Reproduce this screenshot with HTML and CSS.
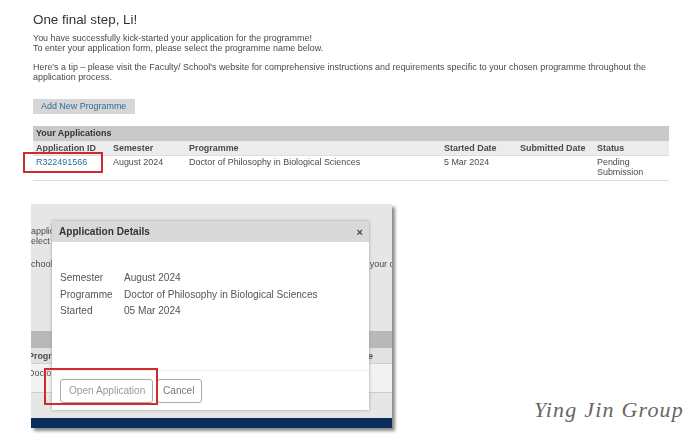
FILE: index.html
```html
<!DOCTYPE html>
<html>
  <head>
    <title>Your Applications</title>
    <meta charset='utf-8'>
    <link rel="stylesheet" href="styles.css">
  </head>

  <body>
    <div class="top">
      <h1 class="title">One final step, Li!</h1>
      <p class="intro">You have successfully kick-started your application for the programme!<br>To enter your application form, please select the programme name below.</p>
      <p class="tip">Here's a tip – please visit the Faculty/ School's website for comprehensive instructions and requirements specific to your chosen programme throughout the application process.</p>
      <a class="add-btn">Add New Programme</a>

      <div class="apps">
        <div class="apps-title">Your Applications</div>
        <div class="apps-row apps-head">
          <span class="c-id">Application ID</span>
          <span class="c-sem">Semester</span>
          <span class="c-prog">Programme</span>
          <span class="c-start">Started Date</span>
          <span class="c-sub">Submitted Date</span>
          <span class="c-status">Status</span>
        </div>
        <div class="apps-row apps-body">
          <a class="c-id link">R322491566</a>
          <span class="c-sem">August 2024</span>
          <span class="c-prog">Doctor of Philosophy in Biological Sciences</span>
          <span class="c-start">5 Mar 2024</span>
          <span class="c-sub"></span>
          <span class="c-status">Pending Submission</span>
        </div>
        <div class="red-box id-mark"></div>
      </div>
    </div>

    <div class="shot">
      <div class="behind">
        <div class="behind-text">
          <div>applic</div>
          <div>elect t</div>
          <div class="behind-gap"><span>chool'</span><span>your c</span></div>
        </div>
        <div class="behind-band"></div>
        <div class="behind-head"><b class="cut">Progr</b><b>e</b></div>
        <div class="behind-row"><span class="cut">Docto</span></div>
        <div class="behind-rest"></div>
        <div class="behind-navy"></div>
      </div>

      <div class="modal">
        <div class="modal-head">
          <b>Application Details</b>
          <span class="modal-x">×</span>
        </div>
        <div class="modal-body">
          <div class="detail"><span>Semester</span><span>August 2024</span></div>
          <div class="detail"><span>Programme</span><span>Doctor of Philosophy in Biological Sciences</span></div>
          <div class="detail"><span>Started</span><span>05 Mar 2024</span></div>
        </div>
        <div class="modal-foot">
          <a class="btn btn-open">Open Application</a>
          <a class="btn btn-cancel">Cancel</a>
        </div>
      </div>
      <div class="red-box open-mark"></div>
    </div>

    <div class="sign">Ying Jin Group</div>
  </body>
</html>
```

FILE: styles.css
```css
html, body {
  margin: 0;
  padding: 0;
}
body {
  position: relative;
  width: 693px;
  height: 441px;
  overflow: hidden;
  background: #fff;
  font-family: "Liberation Sans", Arial, sans-serif;
  font-size: 8.94px;
  line-height: 10px;
  color: #4a4a4a;
}

.top {
  padding: 12px 24px 0 33px;
  filter: blur(0.4px);
}
.title {
  margin: 0 0 5px 0;
  font-size: 13.4px;
  line-height: 16px;
  font-weight: normal;
  color: #333;
}
.intro {
  margin: 0 0 9px 0;
}
.tip {
  margin: 0 0 17px 0;
}
.add-btn {
  display: inline-block;
  padding: 0 9px 0 8px;
  height: 15px;
  line-height: 15px;
  background: #d6d6d6;
  color: #2a6f9e;
}

.apps {
  position: relative;
  width: 636px;
  margin-top: 12px;
}
.apps-title {
  height: 15px;
  line-height: 15px;
  padding-left: 3px;
  background: #c9c9c9;
  font-weight: bold;
  color: #333;
}
.apps-row {
  display: flex;
  padding-left: 3px;
}
.apps-head {
  height: 14px;
  line-height: 14px;
  background: #ececec;
  border-bottom: 1px solid #ddd;
  font-weight: bold;
}
.apps-body {
  height: 23px;
  padding-top: 1px;
  border-bottom: 1px solid #ddd;
}
.c-id { width: 77px; }
.c-sem { width: 76px; }
.c-prog { width: 255px; }
.c-start { width: 76px; }
.c-sub { width: 77px; }
.c-status { width: 68px; }
.link {
  color: #2a6f9e;
}

.red-box {
  position: absolute;
  border: 2px solid #cf2a30;
  box-sizing: border-box;
}
.id-mark {
  left: -10px;
  top: 26px;
  width: 80px;
  height: 21px;
}

.shot {
  position: absolute;
  left: 31px;
  top: 204px;
  width: 361px;
  height: 224px;
  box-shadow: 3px 3px 3px #8a8a8a;
  filter: blur(0.35px);
}
.behind {
  display: flex;
  flex-direction: column;
  height: 224px;
  background: #e6e6e6;
  overflow: hidden;
  white-space: nowrap;
}
.behind-text {
  flex: 1;
  padding-top: 22px;
}
.behind-gap {
  display: flex;
  justify-content: space-between;
  margin-top: 13px;
  margin-right: -2px;
}
.behind-band {
  height: 17px;
  background: #b9b9b9;
}
.behind-head {
  display: flex;
  justify-content: space-between;
  height: 16px;
  line-height: 16px;
  padding-right: 19px;
  background: #e2e2e2;
  border-bottom: 1px solid #d0d0d0;
  box-sizing: border-box;
}
.cut {
  margin-left: -3px;
}
.behind-row {
  height: 29px;
  background: #f2f2f2;
  border-bottom: 1px solid #ccc;
  box-sizing: border-box;
  line-height: 18px;
}
.behind-rest {
  height: 25px;
  background: #e6e6e6;
}
.behind-navy {
  height: 10px;
  background: #0b2d5a;
}

.modal {
  position: absolute;
  left: 21px;
  top: 17px;
  width: 317px;
  height: 189px;
  display: flex;
  flex-direction: column;
  background: #fff;
  box-shadow: 0 0 3px #999;
}
.modal-head {
  display: flex;
  justify-content: space-between;
  align-items: center;
  height: 21px;
  padding: 0 6px 0 7px;
  background: #d9d9d9;
  font-size: 10.1px;
  color: #333;
}
.modal-x {
  font-weight: bold;
  font-size: 11px;
  color: #444;
}
.modal-body {
  flex: 1;
  padding-top: 28px;
}
.detail {
  display: flex;
  height: 16.5px;
  line-height: 16.5px;
  padding-left: 8px;
  font-size: 10.1px;
  color: #555;
}
.detail span:first-child {
  width: 64px;
}
.modal-foot {
  display: flex;
  gap: 4px;
  height: 40px;
  padding: 8px 0 0 8px;
  box-sizing: border-box;
  border-top: 1px solid #eee;
}
.btn {
  height: 24px;
  line-height: 22px;
  box-sizing: border-box;
  border: 1px solid #aaa;
  border-radius: 3px;
  font-size: 10.1px;
  color: #777;
}
.btn-open {
  width: 93px;
  padding-left: 8px;
  color: #999;
}
.btn-cancel {
  width: 45px;
  padding-left: 5px;
}
.open-mark {
  left: 13px;
  top: 164px;
  width: 114px;
  height: 37px;
}

.sign {
  position: absolute;
  left: 534px;
  top: 398px;
  font-family: "Liberation Serif", serif;
  font-style: italic;
  font-size: 22px;
  letter-spacing: 1.2px;
  line-height: 24px;
  color: #666;
}
```
